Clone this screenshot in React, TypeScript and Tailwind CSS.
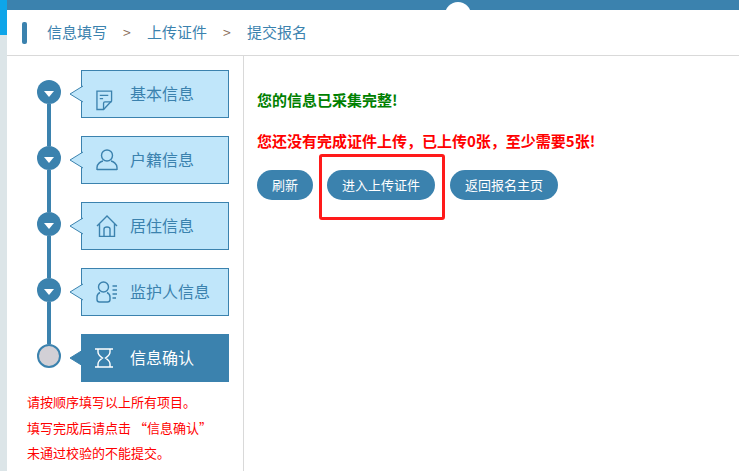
const font = { fontFamily: '"Noto Sans CJK SC", "Liberation Sans", sans-serif' };

function NoteIcon() {
	return (
		<svg className="mt-[12px]" width="17" height="21" viewBox="0 0 18 22" fill="none" stroke="currentColor" strokeWidth="1.4">
			<path d="M1 1h15.500v10.500L8 20.500H1z" />
			<path d="M4 5.500h9M4 9h3.500M8 20.500v-6.500q0-1.500 1.500-1.500h7" />
		</svg>
	);
}

function UserIcon() {
	return (
		<svg width="22" height="22" viewBox="0 0 22 22" fill="none" stroke="currentColor" strokeWidth="1.4">
			<circle cx="11" cy="6.500" r="5.500" />
			<path d="M1 21v-2.500c0-3.500 3.500-6 6-6.500M21 21v-2.500c0-3.500-3.500-6-6-6.500M1 20.500h20" />
		</svg>
	);
}

function HomeIcon() {
	return (
		<svg width="22" height="22" viewBox="0 0 22 22" fill="none" stroke="currentColor" strokeWidth="1.4">
			<path d="M1 11L11 1l10 10M3.500 9v12.500h15V9" />
			<path d="M8 21.500v-7.500q0-2 3-2t3 2v7.500" />
		</svg>
	);
}

function GuardianIcon() {
	return (
		<svg width="22" height="22" viewBox="0 0 22 22" fill="none" stroke="currentColor" strokeWidth="1.4">
			<ellipse cx="7.500" cy="6" rx="5" ry="5" />
			<path d="M4 11.500Q1 13 1 16v2.500Q1 21 3.500 21h8q2.500 0 2.500-2.500V16q0-3-3-4.500" />
			<path d="M16.500 5H21M16.500 9H21M16.500 13H21M16.500 17H20" />
		</svg>
	);
}

function HourglassIcon() {
	return (
		<svg className="-ml-[1px]" width="18" height="20" viewBox="0 0 18 20" fill="none" stroke="currentColor" strokeWidth="1.4">
			<path d="M0 1h18M0 19h18" />
			<path d="M3 1v3q0 3 4.500 6Q3 13 3 16v3M15 1v3q0 3-4.500 6q4.500 3 4.500 6v3" />
		</svg>
	);
}

const steps = [
	{ label: "基本信息", icon: <NoteIcon /> },
	{ label: "户籍信息", icon: <UserIcon /> },
	{ label: "居住信息", icon: <HomeIcon /> },
	{ label: "监护人信息", icon: <GuardianIcon /> },
];

function Step({ label, icon, active, first }: { label: string; icon: React.ReactNode; active?: boolean; first?: boolean }) {
	return (
		<div className="flex h-[66px]">
			<div className="flex w-[24px] flex-col items-center">
				<div className={`h-[10px] w-[4px] shrink-0 ${first ? "" : "bg-[#3b82ae]"}`} />
				{active ? (
					<div className="h-[24px] w-[24px] shrink-0 rounded-full border-2 border-[#3b82ae] bg-[#d2d0d6]" />
				) : (
					<>
						<div className="flex h-[24px] w-[24px] shrink-0 items-center justify-center rounded-full bg-[#3b82ae]">
							<div className="mt-[3px] h-0 w-0 border-x-[5px] border-t-[6px] border-x-transparent border-t-white" />
						</div>
						<div className="h-[32px] w-[4px] shrink-0 bg-[#3b82ae]" />
					</>
				)}
			</div>
			<div
				className={`relative ml-[20px] flex h-[48px] w-[148px] items-center border pl-[14px] ${
					active ? "border-[#3b82ae] bg-[#3b82ae] text-white" : "border-[#3b82ae] bg-[#c0e6fa] text-[#3b82ae]"
				}`}
			>
				<svg className="absolute left-[-13px] top-[13px]" width="14" height="20" viewBox="0 0 14 20">
					<path
						d="M14 2L1 10l13 8"
						fill={active ? "#3b82ae" : "#c0e6fa"}
						stroke="#3b82ae"
						strokeWidth="1"
					/>
				</svg>
				<div className="flex w-[34px] justify-start">{icon}</div>
				<span className="pb-[2px] text-[16px]">{label}</span>
			</div>
		</div>
	);
}

function Button({ children, className }: { children: React.ReactNode; className?: string }) {
	return (
		<button className={`h-[30px] rounded-[15px] bg-[#3b82ae] px-[15px] text-[13px] text-white ${className ?? ""}`}>
			{children}
		</button>
	);
}

export default function App() {
	return (
		<div className="flex h-screen overflow-hidden bg-white" style={font}>
			<div className="w-[7px] shrink-0 bg-[#dce5e8]">
				<div className="h-[35px] bg-[#0ea5e9]" />
			</div>
			<div className="relative flex min-w-0 flex-1 flex-col">
				<div className="h-[10px] bg-[#3b82ae]" />
				<div className="absolute left-[438px] top-[2px] h-[26px] w-[26px] rounded-full bg-white" />
				<div className="relative flex h-[46px] items-center border-b border-[#d9d9d9] pl-[15px] text-[15px] text-[#3b82ae]">
					<div className="mr-[20px] h-[22px] w-[5px] rounded-[2px] bg-[#3b82ae]" />
					<span>信息填写</span>
					<span className="mx-[16px] w-[8px] text-[14px] text-[#8a6d5a]">&gt;</span>
					<span>上传证件</span>
					<span className="mx-[16px] w-[8px] text-[14px] text-[#8a6d5a]">&gt;</span>
					<span>提交报名</span>
				</div>
				<div className="flex flex-1">
					<div className="w-[237px] shrink-0 border-r border-[#d9d9d9] pl-[30px] pt-[14px]">
						{steps.map((s, i) => (
							<Step key={s.label} label={s.label} icon={s.icon} first={i === 0} />
						))}
						<Step label="信息确认" icon={<HourglassIcon />} active />
						<div className="-ml-[10px] mt-[-11px] text-[13px] leading-[25.500px] text-[#ff0000]">
							<p>请按顺序填写以上所有项目。</p>
							<p>填写完成后请点击 “信息确认”</p>
							<p>未通过校验的不能提交。</p>
						</div>
					</div>
					<div className="relative flex-1 pl-[13px] pt-[34px]">
						<p className="text-[15px] font-bold leading-[20px] text-[#008000]">您的信息已采集完整!</p>
						<p className="mt-[21px] text-[15px] font-bold leading-[20px] text-[#ff0000]">
							{"您还没有完成证件上传\uFF0C已上传0张\uFF0C至少需要5张!"}
						</p>
						<div className="mt-[19px] flex gap-[14px]">
							<Button>刷新</Button>
							<Button>进入上传证件</Button>
							<Button className="ml-[1px]">返回报名主页</Button>
						</div>
						<div className="absolute left-[75px] top-[98px] h-[66px] w-[126px] rounded-[3px] border-[3px] border-[#ff1a1a]" />
					</div>
				</div>
			</div>
		</div>
	);
}
